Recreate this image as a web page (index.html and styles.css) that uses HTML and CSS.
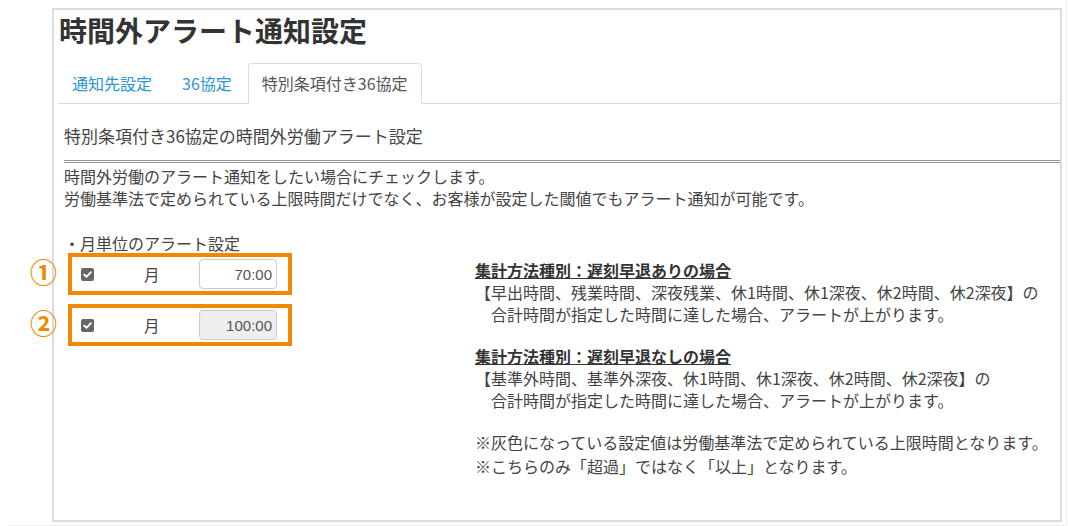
FILE: index.html
```html
<!DOCTYPE html>
<html lang="ja">
<head>
<meta charset="utf-8">
<title>時間外アラート通知設定</title>
<link rel="stylesheet" href="styles.css">
</head>
<body>
<div class="page">
  <div class="panel">
    <h1 class="title">時間外アラート通知設定</h1>
    <ul class="tabs">
      <li class="tab"><a class="tab-link">通知先設定</a></li>
      <li class="tab"><a class="tab-link">36協定</a></li>
      <li class="tab active"><a class="tab-link">特別条項付き36協定</a></li>
    </ul>
    <div class="content">
      <h2 class="subtitle">特別条項付き36協定の時間外労働アラート設定</h2>
      <div class="desc">
        <p class="desc-line">時間外労働のアラート通知をしたい場合にチェックします。</p>
        <p class="desc-line">労働基準法で定められている上限時間だけでなく、お客様が設定した閾値でもアラート通知が可能です。</p>
      </div>
      <p class="group-label">・月単位のアラート設定</p>
      <div class="alert-area">
        <div class="rows">
          <div class="row">
            <span class="mark">①</span>
            <svg class="check" width="13" height="13" viewBox="0 0 13 13"><rect x="0" y="0" width="13" height="13" rx="2" fill="#666"/><path d="M3.2 6.6 L5.5 8.9 L9.9 4.2" fill="none" stroke="#fff" stroke-width="1.9" stroke-linecap="round" stroke-linejoin="round"/></svg>
            <span class="unit">月</span>
            <input class="hours" type="text" value="70:00">
          </div>
          <div class="row">
            <span class="mark">②</span>
            <svg class="check" width="13" height="13" viewBox="0 0 13 13"><rect x="0" y="0" width="13" height="13" rx="2" fill="#666"/><path d="M3.2 6.6 L5.5 8.9 L9.9 4.2" fill="none" stroke="#fff" stroke-width="1.9" stroke-linecap="round" stroke-linejoin="round"/></svg>
            <span class="unit">月</span>
            <input class="hours" type="text" value="100:00" disabled>
          </div>
        </div>
        <div class="notes">
          <p class="note-title">集計方法種別：遅刻早退ありの場合</p>
          <p class="note-text">【早出時間、残業時間、深夜残業、休1時間、休1深夜、休2時間、休2深夜】の<br>　合計時間が指定した時間に達した場合、アラートが上がります。</p>
          <p class="note-title spaced">集計方法種別：遅刻早退なしの場合</p>
          <p class="note-text">【基準外時間、基準外深夜、休1時間、休1深夜、休2時間、休2深夜】の<br>　合計時間が指定した時間に達した場合、アラートが上がります。</p>
          <p class="remark spaced">※灰色になっている設定値は労働基準法で定められている上限時間となります。</p>
          <p class="remark second">※こちらのみ「超過」ではなく「以上」となります。</p>
        </div>
      </div>
    </div>
  </div>
</div>
</body>
</html>
```
FILE: styles.css
```css
* { box-sizing: border-box; }
html, body { margin: 0; padding: 0; background: #fff; }
body {
  font-family: "Noto Sans CJK JP", "Liberation Sans", sans-serif;
  color: #444;
}
.page {
  margin-left: 8px;
  width: 1059px;
  height: 526px;
  padding: 8px 0 0 44px;
  border-right: 1px solid #f0f0f0;
  border-bottom: 1px solid #f0f0f0;
}
.panel {
  width: 1010px;
  height: 514px;
  border: 2px solid #ddd;
  background: #fff;
}
.title {
  margin: 0 0 13px 0;
  padding-left: 5px;
  font-size: 28px;
  line-height: 40px;
  font-weight: 700;
  color: #333;
}
.tabs {
  list-style: none;
  margin: 0 0 0 4px;
  padding: 0;
  display: flex;
  border-bottom: 1px solid #ddd;
}
.tab { margin-right: 2px; margin-bottom: -1px; }
.tab-link {
  display: block;
  padding: 9px 13px 10px;
  font-size: 16px;
  line-height: 20px;
  color: #2b95d6;
  border: 1px solid transparent;
  border-bottom: none;
  border-radius: 4px 4px 0 0;
}
.tab.active .tab-link {
  color: #555;
  background: #fff;
  border-color: #ddd;
  padding-bottom: 11px;
}
.content { padding-left: 10px; }
.subtitle {
  margin: 20px 0 0 0;
  font-size: 17px;
  line-height: 24px;
  font-weight: 400;
  color: #444;
}
.subtitle::after {
  content: "";
  display: block;
  margin-top: 12px;
  border-top: 3px double #999;
}
.desc {
  margin: 2px 0 0 0;
  font-size: 16px;
  line-height: 22px;
}
.desc-line { margin: 0; }
.group-label {
  margin: 25px 0 0 0;
  font-size: 16px;
  line-height: 19px;
}
.alert-area {
  display: flex;
  margin-left: 4px;
}
.rows { width: 224px; flex: none; }
.row {
  position: relative;
  height: 42px;
  border: 4px solid #ef8a00;
  display: flex;
  align-items: center;
  padding: 0 11px 0 9px;
}
.row + .row { margin-top: 9px; }
.mark {
  position: absolute;
  left: -42px;
  top: 0;
  font-size: 27px;
  line-height: 30px;
  font-weight: 700;
  color: #ef8a00;
}
.check { flex: none; display: block; }
.unit {
  margin-left: 50px;
  font-size: 15.5px;
  color: #444;
}
.hours {
  margin-left: auto;
  width: 78px;
  height: 30px;
  border: 1px solid #ccc;
  border-radius: 4px;
  background: #fff;
  text-align: right;
  padding: 0 4px 0 0;
  font-family: "Liberation Sans", sans-serif;
  font-size: 15px;
  color: #555;
}
.hours:disabled { background: #eee; color: #555; opacity: 1; }
.notes {
  margin-left: 183px;
  padding-top: 6px;
  font-size: 16px;
  line-height: 22px;
}
.notes p { margin: 0; }
.note-title {
  font-weight: 700;
  color: #333;
  text-decoration: underline;
}
.note-text, .remark { color: #444; }
.notes .spaced { margin-top: 20px; }
.notes .remark.second { margin-top: 2px; }
```
